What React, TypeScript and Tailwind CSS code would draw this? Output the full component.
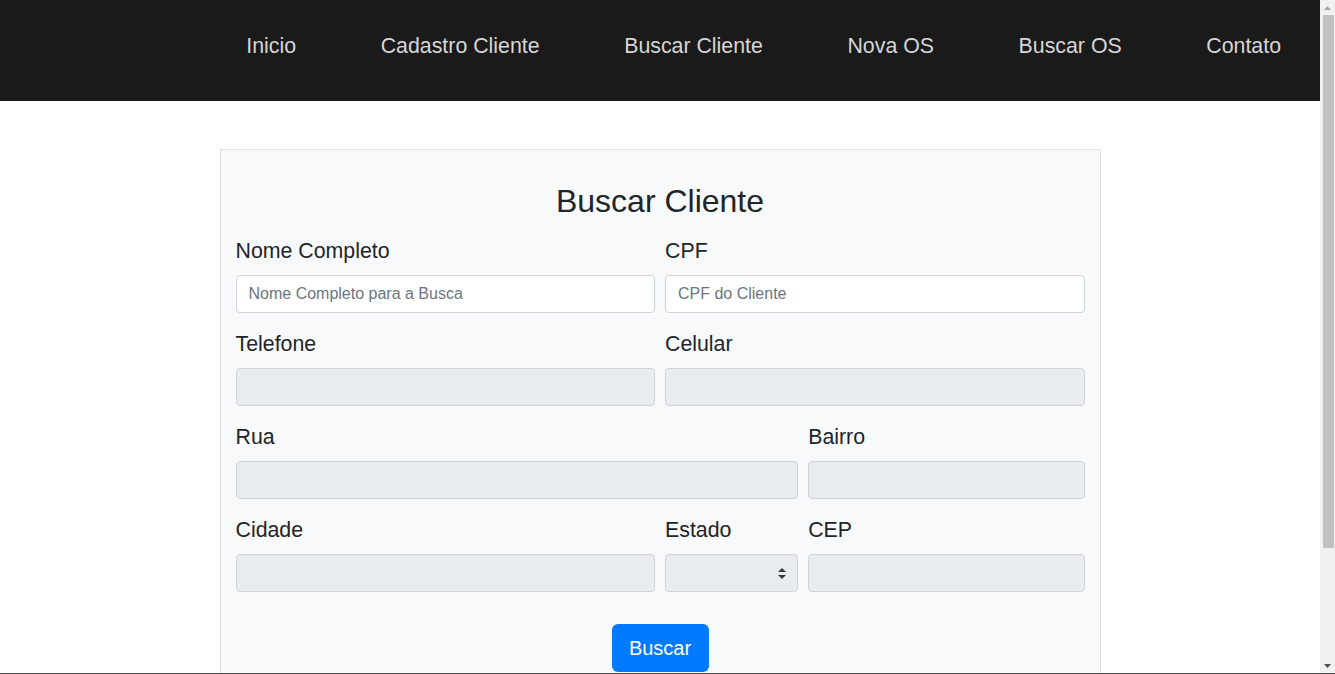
import React from "react";

const navItems = ["Inicio", "Cadastro Cliente", "Buscar Cliente", "Nova OS", "Buscar OS", "Contato"];

function Field({
  label,
  span,
  placeholder,
  disabled,
}: {
  label: string;
  span: string;
  placeholder?: string;
  disabled?: boolean;
}) {
  return (
    <div className={`${span} mb-[15px]`}>
      <label className="block text-[21.33px] leading-[30px] pt-px mb-[9px] text-[#212529]">{label}</label>
      <input
        type="text"
        placeholder={placeholder}
        disabled={disabled}
        className={`block w-full h-[38px] px-3 text-[16px] rounded-[4px] border border-[#ced4da] text-[#495057] placeholder:text-[#6c757d] outline-none ${
          disabled ? "bg-[#e9ecef]" : "bg-white"
        }`}
      />
    </div>
  );
}

function SelectField({ label, span }: { label: string; span: string }) {
  return (
    <div className={`${span} mb-[15px]`}>
      <label className="block text-[21.33px] leading-[30px] pt-px mb-[9px] text-[#212529]">{label}</label>
      <div className="relative h-[38px] rounded-[4px] border border-[#ced4da] bg-[#e9ecef]">
        <select disabled className="w-full h-full appearance-none bg-transparent px-3 outline-none" />
        <svg className="absolute right-[11px] top-[13px]" width="8" height="11" viewBox="0 0 8 11">
          <path d="M4 0 L8 4 H0 Z" fill="#343a40" />
          <path d="M4 11 L8 7 H0 Z" fill="#343a40" />
        </svg>
      </div>
    </div>
  );
}

function Scrollbar() {
  return (
    <div className="w-[15px] shrink-0 bg-[#f1f1f1] flex flex-col items-center">
      <div className="h-[15px] flex items-center justify-center">
        <svg width="7" height="4" viewBox="0 0 7 4">
          <path d="M3.5 0 L7 4 H0 Z" fill="#a3a3a3" />
        </svg>
      </div>
      <div className="w-[11px] ml-[1px] h-[533px] bg-[#c1c1c1]" />
      <div className="flex-1" />
      <div className="h-[15px] flex items-center justify-center">
        <svg width="7" height="4" viewBox="0 0 7 4">
          <path d="M0 0 H7 L3.5 4 Z" fill="#505050" />
        </svg>
      </div>
    </div>
  );
}

export default function App() {
  return (
    <div className="h-[674px] flex flex-col overflow-hidden bg-white font-['Liberation_Sans',Arial,sans-serif] text-[#212529]">
      <div className="h-[673px] flex">
        <div className="flex-1 overflow-hidden">
          <nav className="h-[101px] bg-[#1a1a1a] flex justify-end items-start pt-[30px] pr-[39px] gap-[84.6px]">
            {navItems.map((item) => (
              <a key={item} href="#" className="text-[21.33px] leading-[32px] text-[#d6d6d6]">
                {item}
              </a>
            ))}
          </nav>

          <div className="pt-[48px] pb-[60px] flex justify-center">
            <div className="w-[881px] border border-[#dfdfdf] bg-[#f8f9fa] px-[15px] pt-[32px] pb-[32px]">
              <h2 className="text-center text-[32px] leading-[38.4px] mb-[15px]">Buscar Cliente</h2>
              <form className="grid grid-cols-12 gap-x-[10px]">
                <Field label="Nome Completo" span="col-span-6" placeholder="Nome Completo para a Busca" />
                <Field label="CPF" span="col-span-6" placeholder="CPF do Cliente" />
                <Field label="Telefone" span="col-span-6" disabled />
                <Field label="Celular" span="col-span-6" disabled />
                <Field label="Rua" span="col-span-8" disabled />
                <Field label="Bairro" span="col-span-4" disabled />
                <Field label="Cidade" span="col-span-6" disabled />
                <SelectField label="Estado" span="col-span-2" />
                <Field label="CEP" span="col-span-4" disabled />
                <div className="col-span-12 flex justify-center mt-[17px]">
                  <button
                    type="button"
                    className="h-[48px] w-[97px] text-[20px] leading-[30px] rounded-[6px] bg-[#007bff] text-white"
                  >
                    Buscar
                  </button>
                </div>
              </form>
            </div>
          </div>
        </div>
        <Scrollbar />
      </div>
      <div className="h-px bg-[#555555]" />
    </div>
  );
}
